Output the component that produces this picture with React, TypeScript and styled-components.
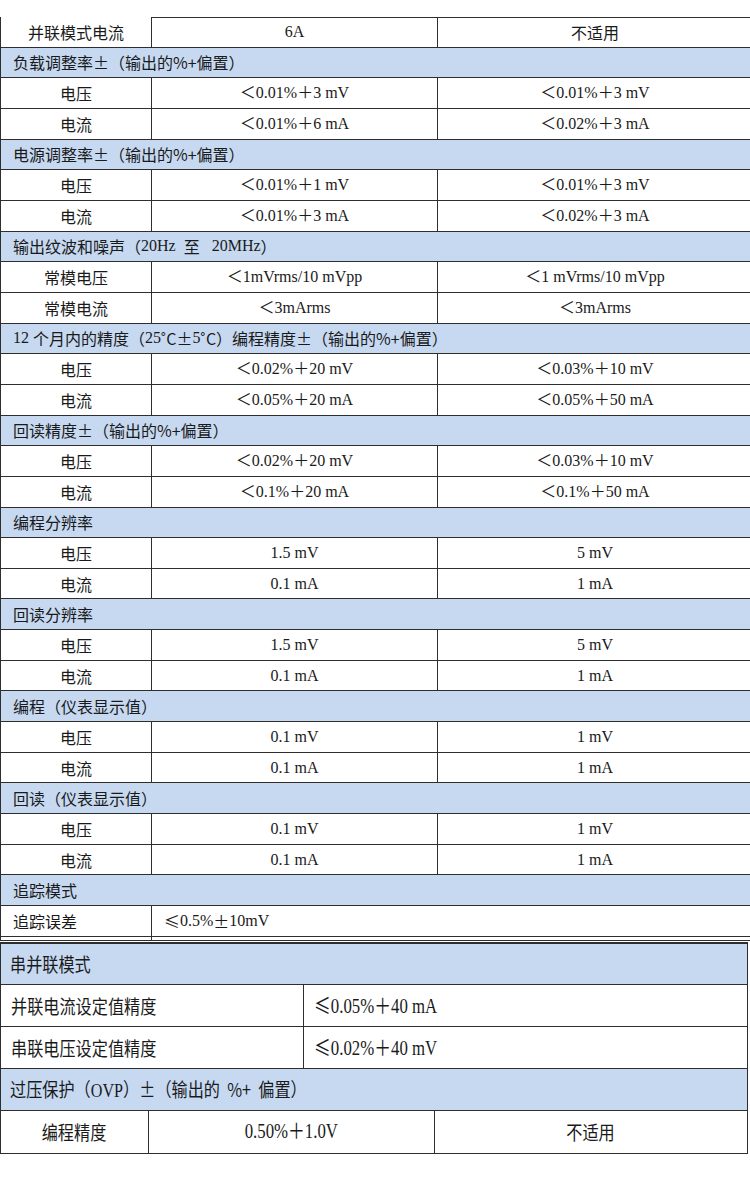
import React from 'react';
import styled, { createGlobalStyle } from 'styled-components';

const GlobalStyle = createGlobalStyle`
  html, body {
    margin: 0;
    padding: 0;
    background: #fff;
  }
  body {
    width: 750px;
    height: 1178px;
    overflow: hidden;
    font-family: 'Liberation Serif', 'Noto Sans CJK SC', serif;
    color: #1a1a1a;
  }
`;

const LINE = '#2e2e2e';
const BLUE = '#c6d9f1';

const Page = styled.div`
  width: 750px;
  padding-top: 17px;
  overflow: hidden;
`;

/* ---------- first table ---------- */

const SpecTable = styled.div`
  width: 752px;
  display: grid;
  grid-template-columns: 151px 286px 1fr;
  grid-auto-rows: 30.67px;
  border-left: 1px solid ${LINE};
`;

const Cell = styled.div<{ $top?: boolean; $align?: 'left' | 'center' }>`
  box-sizing: border-box;
  display: flex;
  align-items: center;
  justify-content: ${({ $align }) => ($align === 'left' ? 'flex-start' : 'center')};
  padding-left: ${({ $align }) => ($align === 'left' ? '12px' : '0')};
  border-right: 1px solid ${LINE};
  border-bottom: 1px solid ${LINE};
  border-top: ${({ $top }) => ($top ? `1px solid ${LINE}` : 'none')};
  font-size: 16px;
  line-height: 1;
  white-space: nowrap;
`;

const LabelCell = styled(Cell)`
  font-family: 'Noto Sans CJK SC', sans-serif;
`;

const WideCell = styled(Cell)`
  grid-column: 2 / -1;
  padding-left: 12px;
`;

const GroupHead = styled.div`
  grid-column: 1 / -1;
  box-sizing: border-box;
  display: flex;
  align-items: center;
  padding-left: 12px;
  background: ${BLUE};
  border-bottom: 1px solid ${LINE};
  font-size: 16px;
  line-height: 1;
  white-space: pre;
`;

const Sans = styled.span`
  font-family: 'Noto Sans CJK SC', sans-serif;
`;

const Stub = styled.div`
  width: 752px;
  height: 3px;
  display: grid;
  grid-template-columns: 151px 1fr;
  border-left: 1px solid ${LINE};
  border-bottom: 1px solid ${LINE};
`;

const StubCell = styled.div`
  border-right: 1px solid ${LINE};
`;

/* ---------- second table ---------- */

const ModeTable = styled.div`
  width: 748px;
  margin-top: 1px;
  box-sizing: border-box;
  border: 1px solid ${LINE};
  border-top-width: 2px;
  display: flex;
  flex-direction: column;
`;

const ModeHead = styled.div`
  height: 41.5px;
  box-sizing: border-box;
  display: flex;
  align-items: center;
  padding-left: 9px;
  background: ${BLUE};
  border-bottom: 1px solid ${LINE};
  white-space: pre;
`;

const ModeRow = styled.div<{ $cols: string; $last?: boolean }>`
  height: 42px;
  box-sizing: border-box;
  display: grid;
  grid-template-columns: ${({ $cols }) => $cols};
  border-bottom: ${({ $last }) => ($last ? 'none' : `1px solid ${LINE}`)};
`;

const ModeCell = styled.div<{ $align?: 'left' | 'center'; $edge?: boolean }>`
  display: flex;
  align-items: center;
  justify-content: ${({ $align }) => ($align === 'left' ? 'flex-start' : 'center')};
  padding-left: ${({ $align }) => ($align === 'left' ? '10px' : '0')};
  border-right: ${({ $edge }) => ($edge ? 'none' : `1px solid ${LINE}`)};
  overflow: hidden;
  white-space: nowrap;
`;

/* narrow, tall lettering of the lower table */
const Tall = styled.span<{ $serif?: boolean; $center?: boolean }>`
  display: inline-block;
  font-family: ${({ $serif }) =>
    $serif ? "'Liberation Serif', 'Noto Sans CJK SC', serif" : "'Noto Sans CJK SC', sans-serif"};
  font-size: ${({ $serif }) => ($serif ? '21px' : '19px')};
  line-height: 1;
  transform: scaleX(${({ $serif }) => ($serif ? 0.8 : 0.85)});
  transform-origin: ${({ $center }) => ($center ? 'center' : 'left')};
  white-space: pre;
`;

type Group = { title: React.ReactNode; rows: [string, React.ReactNode, React.ReactNode][] };

const groups: Group[] = [
  {
    title: <Sans>负载调整率±（输出的%+偏置）</Sans>,
    rows: [
      ['电压', '＜0.01%＋3 mV', '＜0.01%＋3 mV'],
      ['电流', '＜0.01%＋6 mA', '＜0.02%＋3 mA'],
    ],
  },
  {
    title: <Sans>电源调整率±（输出的%+偏置）</Sans>,
    rows: [
      ['电压', '＜0.01%＋1 mV', '＜0.01%＋3 mV'],
      ['电流', '＜0.01%＋3 mA', '＜0.02%＋3 mA'],
    ],
  },
  {
    title: (
      <>
        <Sans>输出纹波和噪声（</Sans>
        {'20Hz\u2002'}
        <Sans>至</Sans>
        {'\u2002 20MHz'}
        <Sans>）</Sans>
      </>
    ),
    rows: [
      ['常模电压', '＜1mVrms/10 mVpp', '＜1 mVrms/10 mVpp'],
      ['常模电流', '＜3mArms', '＜3mArms'],
    ],
  },
  {
    title: (
      <>
        {'12 '}
        <Sans>个月内的精度（</Sans>
        {'25'}
        <Sans>˚C±</Sans>
        {'5'}
        <Sans>˚C）编程精度±（输出的%+偏置）</Sans>
      </>
    ),
    rows: [
      ['电压', '＜0.02%＋20 mV', '＜0.03%＋10 mV'],
      ['电流', '＜0.05%＋20 mA', '＜0.05%＋50 mA'],
    ],
  },
  {
    title: <Sans>回读精度±（输出的%+偏置）</Sans>,
    rows: [
      ['电压', '＜0.02%＋20 mV', '＜0.03%＋10 mV'],
      ['电流', '＜0.1%＋20 mA', '＜0.1%＋50 mA'],
    ],
  },
  {
    title: <Sans>编程分辨率</Sans>,
    rows: [
      ['电压', '1.5 mV', '5 mV'],
      ['电流', '0.1 mA', '1 mA'],
    ],
  },
  {
    title: <Sans>回读分辨率</Sans>,
    rows: [
      ['电压', '1.5 mV', '5 mV'],
      ['电流', '0.1 mA', '1 mA'],
    ],
  },
  {
    title: <Sans>编程（仪表显示值）</Sans>,
    rows: [
      ['电压', '0.1 mV', '1 mV'],
      ['电流', '0.1 mA', '1 mA'],
    ],
  },
  {
    title: <Sans>回读（仪表显示值）</Sans>,
    rows: [
      ['电压', '0.1 mV', '1 mV'],
      ['电流', '0.1 mA', '1 mA'],
    ],
  },
];

const App: React.FC = () => (
  <>
    <GlobalStyle />
    <Page>
      <SpecTable>
        <LabelCell>并联模式电流</LabelCell>
        <Cell $top>6A</Cell>
        <Cell $top>
          <Sans>不适用</Sans>
        </Cell>

        {groups.map((g, i) => (
          <React.Fragment key={i}>
            <GroupHead>{g.title}</GroupHead>
            {g.rows.map(([label, a, b], j) => (
              <React.Fragment key={j}>
                <LabelCell>{label}</LabelCell>
                <Cell>{a}</Cell>
                <Cell>{b}</Cell>
              </React.Fragment>
            ))}
          </React.Fragment>
        ))}

        <GroupHead>
          <Sans>追踪模式</Sans>
        </GroupHead>
        <LabelCell $align="left">追踪误差</LabelCell>
        <WideCell $align="left">
          <Sans>≤</Sans>0.5%<Sans>±</Sans>10mV
        </WideCell>
      </SpecTable>
      <Stub>
        <StubCell />
        <div />
      </Stub>

      <ModeTable>
        <ModeHead>
          <Tall>串并联模式</Tall>
        </ModeHead>
        <ModeRow $cols="303px 1fr">
          <ModeCell $align="left">
            <Tall>并联电流设定值精度</Tall>
          </ModeCell>
          <ModeCell $align="left" $edge>
            <Tall $serif>
              <Sans>≤</Sans>0.05%＋40 mA
            </Tall>
          </ModeCell>
        </ModeRow>
        <ModeRow $cols="303px 1fr">
          <ModeCell $align="left">
            <Tall>串联电压设定值精度</Tall>
          </ModeCell>
          <ModeCell $align="left" $edge>
            <Tall $serif>
              <Sans>≤</Sans>0.02%＋40 mV
            </Tall>
          </ModeCell>
        </ModeRow>
        <ModeHead>
          <Tall>
            过压保护（<span style={{ fontFamily: "'Liberation Serif', serif" }}>OVP</span>）±（输出的  %+  偏置）
          </Tall>
        </ModeHead>
        <ModeRow $cols="148px 286px 1fr" $last>
          <ModeCell>
            <Tall $center>编程精度</Tall>
          </ModeCell>
          <ModeCell>
            <Tall $serif $center>0.50%＋1.0V</Tall>
          </ModeCell>
          <ModeCell $edge>
            <Tall $center>不适用</Tall>
          </ModeCell>
        </ModeRow>
      </ModeTable>
    </Page>
  </>
);

export default App;
